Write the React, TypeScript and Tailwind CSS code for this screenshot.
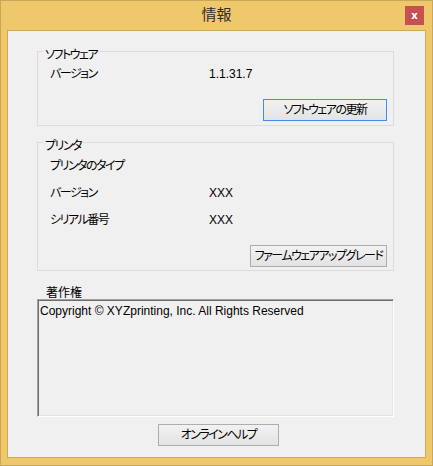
import React from 'react';

const jp = "font-['Liberation_Sans','Noto_Sans_CJK_JP',sans-serif] [font-feature-settings:'palt']";

function WinButton({ label, width, isDefault }: { label: string; width: string; isDefault?: boolean }) {
  return (
    <button
      className={`${width} h-[22px] flex items-center justify-center whitespace-nowrap border bg-gradient-to-b from-[#f2f2f2] to-[#e3e3e3] text-[12px] leading-[14px] tracking-[-1.5px] text-black ${
        isDefault ? 'border-[#3c8ff0]' : 'border-[#adadad]'
      }`}
    >
      {label}
    </button>
  );
}

function Row({ label, value, className = '' }: { label: string; value?: string; className?: string }) {
  return (
    <div className={`flex h-[16px] items-center ${className}`}>
      <span className="w-[171px] pl-[12px] text-[12px] leading-[16px] tracking-[-1.5px]">{label}</span>
      {value && <span className="text-[12px] leading-[16px] font-['Liberation_Sans',sans-serif]">{value}</span>}
    </div>
  );
}

export default function App() {
  return (
    <div className={`w-[433px] h-[466px] flex flex-col bg-[#f0c86c] border border-[#c9a65a] ${jp} text-black`}>
      {/* Title bar */}
      <div className="flex h-[29px] shrink-0">
        <div className="flex-1 pl-[27px] flex items-center justify-center text-[15px] text-[#2e2e2e]">情報</div>
        <button className="mt-[5px] mr-[8px] w-[19px] h-[19px] bg-[#c75050] text-white text-[10px] font-bold leading-none flex items-center justify-center font-['DejaVu_Sans',sans-serif]">
          x
        </button>
      </div>

      {/* Content */}
      <div className="flex-1 ml-[6px] mr-[6px] mb-[7px] border border-[#cfa955] bg-[#f0f0f0] flex flex-col pl-[29px] pr-[31px]">
        {/* Software */}
        <div className="mt-[20px] border border-[#dcdcdc] flex flex-col pb-[4px]">
          <div className="-mt-[4px] ml-[5px] px-[2px] w-fit bg-[#f0f0f0] text-[12px] leading-[14px] tracking-[-1.5px]">ソフトウェア</div>
          <Row label="バージョン" value="1.1.31.7" className="mt-[4px]" />
          <div className="mt-[17px] flex justify-end pr-[6px]">
            <WinButton label="ソフトウェアの更新" width="w-[124px]" isDefault />
          </div>
        </div>

        {/* Printer */}
        <div className="mt-[16px] border border-[#dcdcdc] flex flex-col pb-[3px]">
          <div className="-mt-[4px] ml-[5px] px-[2px] w-fit bg-[#f0f0f0] text-[12px] leading-[14px] tracking-[-1.5px]">プリンタ</div>
          <Row label="プリンタのタイプ" className="mt-[5px]" />
          <Row label="バージョン" value="XXX" className="mt-[11px]" />
          <Row label="シリアル番号" value="XXX" className="mt-[11px]" />
          <div className="mt-[17px] flex justify-end pr-[6px]">
            <WinButton label="ファームウェアアップグレード" width="w-[137px]" />
          </div>
        </div>

        {/* Copyright */}
        <div className="mt-[16px] ml-[9px] text-[12px] leading-[12px]">著作権</div>
        <div className="h-[118px] border border-t-[#a0a0a0] border-l-[#a0a0a0] border-b-white border-r-white shadow-[inset_1px_1px_0_#6e6e6e,inset_-1px_-1px_0_#e3e3e3] pl-[2px] pt-[4px]">
          <p className="text-[12px] leading-[14px] font-['Liberation_Sans',sans-serif]">
            Copyright © XYZprinting, Inc. All Rights Reserved
          </p>
        </div>

        <div className="mt-[7px] ml-[121px]">
          <WinButton label="オンラインヘルプ" width="w-[121px]" />
        </div>
      </div>
    </div>
  );
}
